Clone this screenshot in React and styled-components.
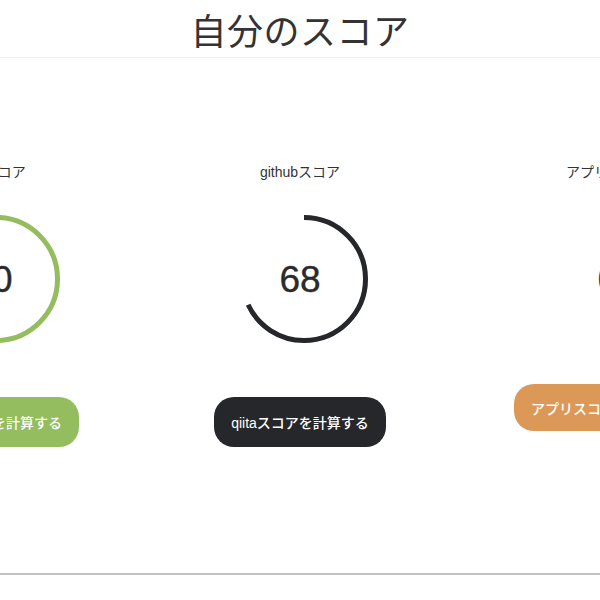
import styled, { createGlobalStyle } from "styled-components";

const GlobalStyle = createGlobalStyle`
  html, body {
    margin: 0;
    padding: 0;
    background: #fff;
    overflow: hidden;
  }
  body {
    font-family: "Liberation Sans", "Noto Sans CJK JP", sans-serif;
    color: #333;
  }
`;

const Page = styled.div`
  width: 600px;
  height: 600px;
  display: flex;
  flex-direction: column;
  overflow: hidden;
`;

const Header = styled.header`
  height: 57px;
  border-bottom: 1px solid #eee;
  display: flex;
  justify-content: center;
  align-items: center;
`;

const Title = styled.h1`
  margin: 0;
  font-family: "Noto Sans CJK JP", sans-serif;
  font-size: 36px;
  font-weight: 400;
  color: #333;
  letter-spacing: 0.5px;
`;

const Main = styled.main`
  height: 515px;
  padding-top: 104px;
  box-sizing: border-box;
  display: flex;
  justify-content: center;
`;

const Column = styled.section`
  flex: 0 0 308px;
  display: flex;
  flex-direction: column;
  align-items: center;
`;

const Label = styled.div`
  font-size: 14px;
  line-height: 20px;
  color: #333;
`;

const Gauge = styled.div`
  position: relative;
  width: 134px;
  height: 134px;
  margin-top: 30px;
  margin-left: 8px;
`;

const Score = styled.span`
  position: absolute;
  inset: 0;
  display: flex;
  align-items: center;
  justify-content: center;
  font-size: 37px;
  color: #2b2b2b;
  padding: 2px 8px 0 0;
  -webkit-text-stroke: 0.4px #2b2b2b;
`;

const CalcButton = styled.button`
  margin-top: ${(p) => (p.$compact ? "38px" : "51px")};
  height: ${(p) => (p.$compact ? "47px" : "50px")};
  padding: 0 17px;
  border: none;
  border-radius: 20px;
  background: ${(p) => p.$color};
  color: #fff;
  font-family: "Liberation Sans", "Noto Sans CJK JP", sans-serif;
  font-size: 14px;
  font-weight: 500;
  white-space: nowrap;
  cursor: pointer;
`;

const Footer = styled.footer`
  border-top: 2px solid #c2c2c2;
  box-shadow: 0 1px 2px rgba(0, 0, 0, 0.06);
  flex: 1;
`;

const R = 61.5;
const C = 2 * Math.PI * R;

function Ring({ percent, color }) {
  return (
    <svg width="134" height="134" viewBox="0 0 134 134">
      {percent > 0 && (
        <circle
          cx="67"
          cy="67"
          r={R}
          fill="none"
          stroke={color}
          strokeWidth="5"
          strokeDasharray={`${(C * percent) / 100} ${C}`}
          transform="rotate(-90 67 67)"
        />
      )}
    </svg>
  );
}

const scores = [
  { label: "qiitaスコア", value: 10, percent: 100, color: "#93bd5e", button: "総合スコアを計算する" },
  { label: "githubスコア", value: 68, percent: 68, color: "#26272b", button: "qiitaスコアを計算する" },
  { label: "アプリスコア", value: 0, percent: 0, color: "#dc9857", button: "アプリスコアを計算する", compact: true },
];

export default function App() {
  return (
    <>
      <GlobalStyle />
      <Page>
        <Header>
          <Title>自分のスコア</Title>
        </Header>
        <Main>
          {scores.map((s) => (
            <Column key={s.label}>
              <Label>{s.label}</Label>
              <Gauge>
                <Ring percent={s.percent} color={s.color} />
                <Score>{s.value}</Score>
              </Gauge>
              <CalcButton $color={s.color} $compact={s.compact}>
                {s.button}
              </CalcButton>
            </Column>
          ))}
        </Main>
        <Footer />
      </Page>
    </>
  );
}
